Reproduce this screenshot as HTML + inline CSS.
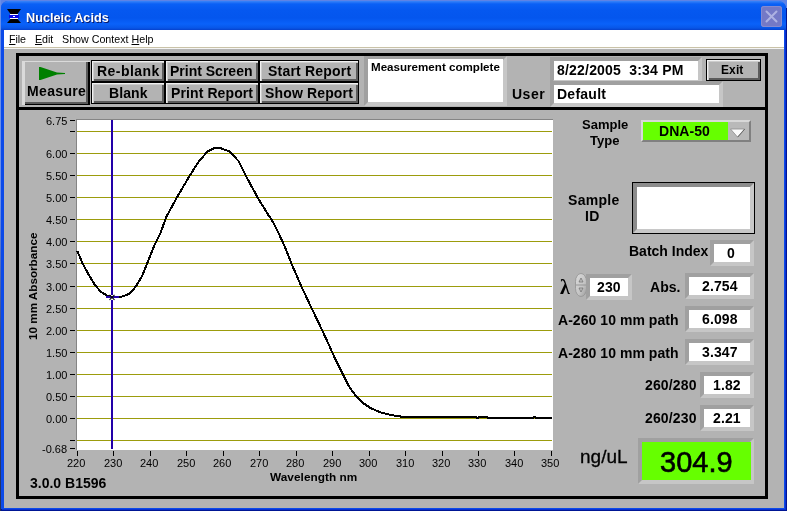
<!DOCTYPE html>
<html><head><meta charset="utf-8"><title>Nucleic Acids</title>
<style>
html,body{margin:0;padding:0;}
body{width:787px;height:511px;overflow:hidden;position:relative;background:#b3b3b3;font-family:"Liberation Sans",sans-serif;}
#win{position:absolute;left:0;top:0;width:787px;height:511px;background:#001694;overflow:hidden;}
#bgl{position:absolute;left:0;top:0;width:787px;height:8px;background:#5d83e6;}
#frame{position:absolute;left:1px;top:1px;width:784px;height:508px;background:#0c4ae8;border-radius:7px 7px 0 0;box-shadow:1px 1px 0 #0831d2;}
#lcol{position:absolute;left:0;top:0;width:1px;height:511px;background:linear-gradient(#6b8fe8 0,#6b8fe8 200px,#3a4c8c 330px,#22305c 511px);}
#title{position:absolute;left:1px;top:1px;width:785px;height:29px;border-radius:7px 7px 0 0;
 background:linear-gradient(#3a84f8 0px,#0a60f6 3px,#0558f0 9px,#0456ee 17px,#0a62fa 23px,#0856e8 27px,#0641cc 29px);}
#close{position:absolute;left:761px;top:6px;width:21px;height:21px;border-radius:3px;background:#7479c6;box-shadow:inset 0 0 0 1px #858ad0;}
#menu{position:absolute;left:4px;top:30px;width:780px;height:17px;background:#fff;border-bottom:1px solid #c9c2a8;}
#client{position:absolute;left:4px;top:48px;width:780px;height:460px;background:#b3b3b3;border-top:1px solid #f4f4f4;box-sizing:border-box;}
div{position:absolute;}
.t{position:absolute;white-space:nowrap;line-height:1;color:#000;will-change:transform;}
.btn{background:#b3b3b3;box-sizing:border-box;border-style:solid;border-width:1px 2px 2px 1px;border-color:#e4e4e4 #5a5a5a #5a5a5a #e4e4e4;box-shadow:1px 1px 0 #000;}
.btnx{background:#b3b3b3;box-sizing:border-box;border:1px solid #000;box-shadow:inset 1px 1px 0 #f0f0f0, inset 2px 2px 0 #cccccc, inset -2px -2px 0 #5c5c5c;}
.big{background:#b3b3b3;box-shadow:inset 3px 1px 0 #dadada, inset -2px -1px 0 #000, inset -4px -3px 0 #5a5a5a;}
.sunk3{box-sizing:border-box;border-style:solid;border-width:4px;border-color:#a0a0a0 #c6c6c6 #c6c6c6 #a0a0a0;}
.sunk3b{box-sizing:border-box;border-style:solid;border-width:4px;border-color:#8c8c8c #c8c8c8 #c8c8c8 #8c8c8c;}
.sunk4{box-sizing:border-box;border-style:solid;border-width:4px 3px 4px 4px;border-color:#9a9a9a #c8c8c8 #c8c8c8 #9a9a9a;}
.raised2{box-sizing:border-box;background:#b9b9b9;border-style:solid;border-width:2px;border-color:#d8d8d8 #808080 #808080 #d8d8d8;}
</style></head><body>
<div id="win"><div id="bgl"></div><div id="lcol"></div><div id="frame"></div><div id="client"></div>
<div id="title"></div>
<svg id="ico" width="16" height="16" viewBox="0 0 16 16" style="position:absolute;left:6px;top:8px">
<polygon points="1,1 15,1 11.5,6 4.5,6" fill="#000"/>
<g shape-rendering="crispEdges">
<rect x="4" y="6" width="8" height="1" fill="#fff"/>
<rect x="3" y="7" width="10" height="3" fill="#0c0ce6"/>
<rect x="7" y="8" width="2" height="1" fill="#fff"/>
<rect x="4" y="10" width="8" height="1" fill="#fff"/>
</g>
<polygon points="4.5,11 11.5,11 15,15 1,15" fill="#000"/>
</svg>
<span class="t" style="left:25.60px;top:11.95px;font-size:12.7px;font-weight:bold;color:#fff;text-shadow:1px 1px 0 #0a1a6a;">Nucleic Acids</span>
<div id="close"><svg width="21" height="21" viewBox="0 0 21 21"><path d="M5.5 5.5 L15.5 15.5 M15.5 5.5 L5.5 15.5" stroke="#aeb2e2" stroke-width="2" stroke-linecap="round"/></svg></div>
<div id="menu"></div>
<span class="t" style="left:9.00px;top:33.94px;font-size:10.7px;letter-spacing:-0.1px;"><u>F</u>ile</span>
<span class="t" style="left:34.70px;top:33.94px;font-size:10.7px;letter-spacing:-0.05px;"><u>E</u>dit</span>
<span class="t" style="left:62.30px;top:33.94px;font-size:10.7px;">Show Context <u>H</u>elp</span>
<div style="left:16px;top:53px;width:752px;height:446px;background:#000;"></div>
<div style="left:19px;top:56px;width:746px;height:51px;background:#b3b3b3;"></div>
<div style="left:19px;top:110px;width:746px;height:386px;background:#b3b3b3;"></div>
<div class="big" style="left:22px;top:61px;width:68px;height:44px;"></div>
<svg width="28" height="16" viewBox="0 0 28 16" style="position:absolute;left:38px;top:66px"><polygon points="1,1 1,14 2.5,14 19,8.4 27,8.1 27,7 19,6.6 2.5,1" fill="#008000"/></svg>
<span class="t" style="left:26.60px;top:83.85px;font-size:14px;font-weight:bold;letter-spacing:0.35px;">Measure</span>
<div class="btnx" style="left:91px;top:60px;width:74px;height:22px;"></div>
<span class="t" style="left:96.50px;top:63.85px;font-size:14px;font-weight:bold;letter-spacing:0.45px;">Re-blank</span>
<div class="btnx" style="left:91px;top:82px;width:74px;height:22px;"></div>
<span class="t" style="left:108.50px;top:85.85px;font-size:14px;font-weight:bold;letter-spacing:0.1px;">Blank</span>
<div class="btnx" style="left:165px;top:60px;width:94px;height:22px;"></div>
<span class="t" style="left:170.00px;top:63.85px;font-size:14px;font-weight:bold;">Print Screen</span>
<div class="btnx" style="left:165px;top:82px;width:94px;height:22px;"></div>
<span class="t" style="left:170.50px;top:85.85px;font-size:14px;font-weight:bold;letter-spacing:0.1px;">Print Report</span>
<div class="btnx" style="left:259px;top:60px;width:100px;height:22px;"></div>
<span class="t" style="left:267.50px;top:63.85px;font-size:14px;font-weight:bold;letter-spacing:0.2px;">Start Report</span>
<div class="btnx" style="left:259px;top:82px;width:100px;height:22px;"></div>
<span class="t" style="left:265.00px;top:85.85px;font-size:14px;font-weight:bold;letter-spacing:0.15px;">Show Report</span>
<div class="sunk3" style="left:364px;top:56px;width:143px;height:50px;"></div>
<div style="left:368px;top:59px;width:135px;height:43px;background:#fff;"></div>
<span class="t" style="left:371.00px;top:60.68px;font-size:11.6px;font-weight:bold;">Measurement complete</span>
<span class="t" style="left:511.50px;top:87.15px;font-size:14px;font-weight:bold;letter-spacing:0.5px;">User</span>
<div class="sunk3" style="left:550px;top:57px;width:152px;height:27px;"></div>
<div style="left:554px;top:61px;width:144px;height:19px;background:#fff;"></div>
<span class="t" style="left:556.60px;top:63.15px;font-size:14px;font-weight:bold;letter-spacing:0.2px;">8/22/2005&nbsp; 3:34 PM</span>
<div class="sunk3" style="left:550px;top:81px;width:173px;height:26px;"></div>
<div style="left:554px;top:85px;width:165px;height:18px;background:#fff;"></div>
<span class="t" style="left:556.80px;top:87.45px;font-size:14px;font-weight:bold;letter-spacing:0.25px;">Default</span>
<div class="btnx" style="left:706px;top:59px;width:55px;height:22px;"></div>
<span class="t" style="left:720.80px;top:64.34px;font-size:12px;font-weight:bold;letter-spacing:0.1px;">Exit</span>
<svg id="plot" width="787" height="511" viewBox="0 0 787 511" style="position:absolute;left:0;top:0" shape-rendering="crispEdges">
<rect x="76" y="119" width="477" height="331" fill="#858585"/>
<rect x="77" y="120" width="476" height="330" fill="#fff"/>
<rect x="77" y="440" width="475" height="1" fill="#9c9c0c"/>
<rect x="77" y="418" width="475" height="1" fill="#9c9c0c"/>
<rect x="77" y="396" width="475" height="1" fill="#9c9c0c"/>
<rect x="77" y="374" width="475" height="1" fill="#9c9c0c"/>
<rect x="77" y="352" width="475" height="1" fill="#9c9c0c"/>
<rect x="77" y="330" width="475" height="1" fill="#9c9c0c"/>
<rect x="77" y="308" width="475" height="1" fill="#9c9c0c"/>
<rect x="77" y="286" width="475" height="1" fill="#9c9c0c"/>
<rect x="77" y="263" width="475" height="1" fill="#9c9c0c"/>
<rect x="77" y="241" width="475" height="1" fill="#9c9c0c"/>
<rect x="77" y="219" width="475" height="1" fill="#9c9c0c"/>
<rect x="77" y="197" width="475" height="1" fill="#9c9c0c"/>
<rect x="77" y="175" width="475" height="1" fill="#9c9c0c"/>
<rect x="77" y="153" width="475" height="1" fill="#9c9c0c"/>
<rect x="77" y="131" width="475" height="1" fill="#9c9c0c"/>
<rect x="70" y="440" width="5" height="1" fill="#000"/>
<rect x="70" y="418" width="5" height="1" fill="#000"/>
<rect x="70" y="396" width="5" height="1" fill="#000"/>
<rect x="70" y="374" width="5" height="1" fill="#000"/>
<rect x="70" y="352" width="5" height="1" fill="#000"/>
<rect x="70" y="330" width="5" height="1" fill="#000"/>
<rect x="70" y="308" width="5" height="1" fill="#000"/>
<rect x="70" y="286" width="5" height="1" fill="#000"/>
<rect x="70" y="263" width="5" height="1" fill="#000"/>
<rect x="70" y="241" width="5" height="1" fill="#000"/>
<rect x="70" y="219" width="5" height="1" fill="#000"/>
<rect x="70" y="197" width="5" height="1" fill="#000"/>
<rect x="70" y="175" width="5" height="1" fill="#000"/>
<rect x="70" y="153" width="5" height="1" fill="#000"/>
<rect x="70" y="131" width="5" height="1" fill="#000"/>
<rect x="70" y="120" width="5" height="1" fill="#000"/>
<rect x="70" y="448" width="5" height="1" fill="#000"/>
<rect x="77" y="451" width="1" height="5" fill="#000"/>
<rect x="113" y="451" width="1" height="5" fill="#000"/>
<rect x="150" y="451" width="1" height="5" fill="#000"/>
<rect x="186" y="451" width="1" height="5" fill="#000"/>
<rect x="223" y="451" width="1" height="5" fill="#000"/>
<rect x="259" y="451" width="1" height="5" fill="#000"/>
<rect x="296" y="451" width="1" height="5" fill="#000"/>
<rect x="332" y="451" width="1" height="5" fill="#000"/>
<rect x="369" y="451" width="1" height="5" fill="#000"/>
<rect x="405" y="451" width="1" height="5" fill="#000"/>
<rect x="442" y="451" width="1" height="5" fill="#000"/>
<rect x="478" y="451" width="1" height="5" fill="#000"/>
<rect x="514" y="451" width="1" height="5" fill="#000"/>
<rect x="551" y="451" width="1" height="5" fill="#000"/>
<path d="M77.2,250.7 L82.3,263.0 L88.5,274.3 L94.6,284.5 L100.8,291.7 L107.0,295.6 L113.1,296.8 L121.3,296.8 L129.5,293.8 L135.7,286.6 L141.9,276.3 L145.6,267.3 L150.4,255.2 L155.2,243.5 L160.3,233.4 L166.4,216.8 L176.7,197.8 L190.0,175.2 L199.3,160.8 L207.5,151.6 L213.7,148.3 L220.8,148.3 L229.0,151.1 L238.3,160.8 L245.5,175.2 L257.8,197.8 L268.5,215.3 L271.6,219.5 L277.7,231.4 L282.4,241.3 L287.0,252.0 L291.7,264.3 L296.2,274.5 L301.3,286.5 L306.5,297.3 L311.6,308.4 L316.7,318.7 L321.5,328.8 L328.4,343.8 L335.2,358.9 L342.0,372.6 L348.9,386.3 L355.8,395.9 L362.6,402.7 L370.8,408.2 L380.4,412.3 L391.4,415.1 L402.3,416.8 L475.5,416.8 L476.5,417.8 L478.5,417.8 L479.5,416.8 L487.0,416.8 L488.0,417.8 L533.5,417.8 L534.5,416.8 L535.5,417.8 L552.0,417.8" fill="none" stroke="#000" stroke-width="2" stroke-linejoin="round" shape-rendering="crispEdges"/>
<rect x="111" y="120" width="2" height="329" fill="#2200a8"/>
<rect x="106" y="296" width="13" height="2" fill="#2200a8"/>
<rect x="111" y="295" width="2" height="1" fill="#fff"/><rect x="111" y="298" width="2" height="2" fill="#fff"/>
<path d="M109.5 294.8 L114.5 299.8 M114.5 294.8 L109.5 299.8" stroke="#000" stroke-width="1.1" shape-rendering="auto"/>
</svg>
<span class="t" style="left:45.60px;top:115.79px;font-size:11px;">6.75</span>
<span class="t" style="left:41.90px;top:443.79px;font-size:11px;">-0.68</span>
<span class="t" style="left:45.60px;top:413.79px;font-size:11px;">0.00</span>
<span class="t" style="left:45.60px;top:391.79px;font-size:11px;">0.50</span>
<span class="t" style="left:45.60px;top:369.79px;font-size:11px;">1.00</span>
<span class="t" style="left:45.60px;top:347.79px;font-size:11px;">1.50</span>
<span class="t" style="left:45.60px;top:325.79px;font-size:11px;">2.00</span>
<span class="t" style="left:45.60px;top:303.79px;font-size:11px;">2.50</span>
<span class="t" style="left:45.60px;top:281.79px;font-size:11px;">3.00</span>
<span class="t" style="left:45.60px;top:258.79px;font-size:11px;">3.50</span>
<span class="t" style="left:45.60px;top:236.79px;font-size:11px;">4.00</span>
<span class="t" style="left:45.60px;top:214.79px;font-size:11px;">4.50</span>
<span class="t" style="left:45.60px;top:192.79px;font-size:11px;">5.00</span>
<span class="t" style="left:45.60px;top:170.79px;font-size:11px;">5.50</span>
<span class="t" style="left:45.60px;top:148.79px;font-size:11px;">6.00</span>
<span class="t" style="left:67.30px;top:457.69px;font-size:11px;">220</span>
<span class="t" style="left:103.77px;top:457.69px;font-size:11px;">230</span>
<span class="t" style="left:140.24px;top:457.69px;font-size:11px;">240</span>
<span class="t" style="left:176.71px;top:457.69px;font-size:11px;">250</span>
<span class="t" style="left:213.18px;top:457.69px;font-size:11px;">260</span>
<span class="t" style="left:249.65px;top:457.69px;font-size:11px;">270</span>
<span class="t" style="left:286.12px;top:457.69px;font-size:11px;">280</span>
<span class="t" style="left:322.59px;top:457.69px;font-size:11px;">290</span>
<span class="t" style="left:359.06px;top:457.69px;font-size:11px;">300</span>
<span class="t" style="left:395.53px;top:457.69px;font-size:11px;">310</span>
<span class="t" style="left:432.00px;top:457.69px;font-size:11px;">320</span>
<span class="t" style="left:468.47px;top:457.69px;font-size:11px;">330</span>
<span class="t" style="left:504.94px;top:457.69px;font-size:11px;">340</span>
<span class="t" style="left:541.41px;top:457.69px;font-size:11px;">350</span>
<span class="t" style="left:270.00px;top:472.31px;font-size:11.8px;font-weight:bold;letter-spacing:0.05px;">Wavelength nm</span>
<span class="t" style="left:26.5px;top:340px;font-size:11.7px;font-weight:bold;transform:rotate(-90deg);transform-origin:0 0;">10 mm Absorbance</span>
<span class="t" style="left:29.50px;top:475.65px;font-size:14px;font-weight:bold;">3.0.0 B1596</span>
<span class="t" style="left:581.50px;top:118.00px;font-size:13px;font-weight:bold;">Sample</span>
<span class="t" style="left:590.00px;top:134.00px;font-size:13px;font-weight:bold;">Type</span>
<div class="raised2" style="left:641px;top:120px;width:110px;height:22px;"></div>
<div style="left:643px;top:122px;width:85px;height:18px;background:#66ff00;"></div>
<svg width="20" height="14" viewBox="0 0 20 14" style="position:absolute;left:728px;top:125.5px"><polygon points="2.5,3 16.5,3 9.5,11" fill="#fbfbfb" stroke="#8c8c8c" stroke-width="0.8"/><path d="M16.8 3 L9.7 11.2" stroke="#6a6a6a" stroke-width="1" fill="none"/></svg>
<span class="t" style="left:658.80px;top:123.75px;font-size:14px;font-weight:bold;letter-spacing:0.05px;">DNA-50</span>
<span class="t" style="left:567.50px;top:193.15px;font-size:14px;font-weight:bold;letter-spacing:0.3px;">Sample</span>
<span class="t" style="left:585.00px;top:208.65px;font-size:14px;font-weight:bold;letter-spacing:0.3px;">ID</span>
<div style="left:632px;top:182px;width:123px;height:52px;background:#b3b3b3;border:1px solid #000;box-sizing:border-box;"></div>
<div class="sunk3b" style="left:633px;top:183px;width:121px;height:50px;"></div>
<div style="left:637px;top:187px;width:113px;height:42px;background:#fff;"></div>
<span class="t" style="left:629.00px;top:243.75px;font-size:14px;font-weight:bold;">Batch Index</span>
<div class="sunk3" style="left:710px;top:240px;width:44px;height:26px;"></div>
<div style="left:714px;top:244px;width:36px;height:18px;background:#fff;"></div>
<span class="t" style="left:727.30px;top:245.75px;font-size:14px;font-weight:bold;letter-spacing:0.1px;">0</span>
<span class="t" style="left:560.20px;top:277.15px;font-size:20px;font-weight:bold;font-family:'Liberation Serif',serif;">&lambda;</span>
<svg width="12" height="24" viewBox="0 0 12 24" style="position:absolute;left:575px;top:273px">
<defs><linearGradient id="sg" x1="0" y1="0" x2="1" y2="1"><stop offset="0" stop-color="#dcdcdc"/><stop offset="0.6" stop-color="#c4c4c4"/><stop offset="1" stop-color="#9c9c9c"/></linearGradient></defs>
<rect x="0.5" y="0.5" width="11" height="23" rx="5.5" ry="8" fill="url(#sg)" stroke="#969696" stroke-width="0.9"/>
<path d="M4 9 L6 5 L8 9 Z M4 15 L6 19 L8 15 Z" fill="#bdbdbd" stroke="#6e6e6e" stroke-width="0.7"/>
<line x1="1" y1="12" x2="11" y2="12" stroke="#969696"/>
</svg>
<div class="sunk3" style="left:586px;top:274px;width:46px;height:26px;"></div>
<div style="left:590px;top:278px;width:38px;height:18px;background:#fff;"></div>
<span class="t" style="left:596.80px;top:279.95px;font-size:14px;font-weight:bold;letter-spacing:0.1px;">230</span>
<span class="t" style="left:649.50px;top:280.15px;font-size:14px;font-weight:bold;letter-spacing:0.05px;">Abs.</span>
<div class="sunk3" style="left:685px;top:273px;width:69px;height:26px;"></div>
<div style="left:689px;top:277px;width:61px;height:18px;background:#fff;"></div>
<span class="t" style="left:701.50px;top:279.15px;font-size:14px;font-weight:bold;letter-spacing:0.1px;">2.754</span>
<span class="t" style="left:558.40px;top:313.15px;font-size:14px;font-weight:bold;letter-spacing:0.05px;">A-260 10 mm path</span>
<div class="sunk3" style="left:685px;top:306px;width:69px;height:26px;"></div>
<div style="left:689px;top:310px;width:61px;height:18px;background:#fff;"></div>
<span class="t" style="left:701.50px;top:311.85px;font-size:14px;font-weight:bold;letter-spacing:0.1px;">6.098</span>
<span class="t" style="left:558.40px;top:346.15px;font-size:14px;font-weight:bold;letter-spacing:0.05px;">A-280 10 mm path</span>
<div class="sunk3" style="left:685px;top:339px;width:69px;height:26px;"></div>
<div style="left:689px;top:343px;width:61px;height:18px;background:#fff;"></div>
<span class="t" style="left:701.50px;top:344.85px;font-size:14px;font-weight:bold;letter-spacing:0.1px;">3.347</span>
<span class="t" style="left:644.50px;top:378.15px;font-size:14px;font-weight:bold;letter-spacing:0.15px;">260/280</span>
<div class="sunk3" style="left:700px;top:372px;width:54px;height:26px;"></div>
<div style="left:704px;top:376px;width:46px;height:18px;background:#fff;"></div>
<span class="t" style="left:713.00px;top:377.85px;font-size:14px;font-weight:bold;letter-spacing:0.1px;">1.82</span>
<span class="t" style="left:644.50px;top:411.15px;font-size:14px;font-weight:bold;letter-spacing:0.15px;">260/230</span>
<div class="sunk3" style="left:700px;top:405px;width:54px;height:26px;"></div>
<div style="left:704px;top:409px;width:46px;height:18px;background:#fff;"></div>
<span class="t" style="left:713.00px;top:410.75px;font-size:14px;font-weight:bold;letter-spacing:0.1px;">2.21</span>
<span class="t" style="left:579.50px;top:446.92px;font-size:19px;-webkit-text-stroke:0.3px #000;">ng/uL</span>
<div class="sunk3" style="left:638px;top:438px;width:116px;height:46px;"></div>
<div style="left:642px;top:442px;width:109px;height:38px;background:#66ff00;"></div>
<span class="t" style="left:659.80px;top:447.75px;font-size:29px;-webkit-text-stroke:0.6px #000;">304.9</span>
</div>
</body></html>
